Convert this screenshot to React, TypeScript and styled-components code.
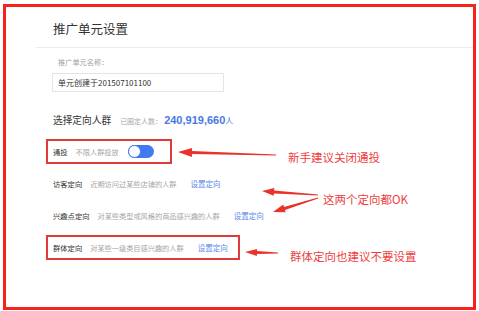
import styled, { createGlobalStyle } from "styled-components";

const GlobalStyle = createGlobalStyle`
  html, body {
    margin: 0;
    padding: 0;
    background: #ffffff;
  }
  body {
    font-family: "Noto Sans CJK SC", "Microsoft YaHei", sans-serif;
    color: #333333;
  }
`;

type Point = [number, number];

// tapered arrow: tip -> tail, head at the tip
function arrowPoints(
  tip: Point,
  tail: Point,
  headLen: number,
  headWidth: number,
  shaftNear: number,
  shaftFar: number
) {
  const dx = tail[0] - tip[0];
  const dy = tail[1] - tip[1];
  const len = Math.hypot(dx, dy);
  const ux = dx / len;
  const uy = dy / len;
  const nx = -uy;
  const ny = ux;
  const bx = tip[0] + ux * headLen;
  const by = tip[1] + uy * headLen;
  const pts: Point[] = [
    tip,
    [bx + (nx * headWidth) / 2, by + (ny * headWidth) / 2],
    [bx + (nx * shaftNear) / 2, by + (ny * shaftNear) / 2],
    [tail[0] + (nx * shaftFar) / 2, tail[1] + (ny * shaftFar) / 2],
    [tail[0] - (nx * shaftFar) / 2, tail[1] - (ny * shaftFar) / 2],
    [bx - (nx * shaftNear) / 2, by - (ny * shaftNear) / 2],
    [bx - (nx * headWidth) / 2, by - (ny * headWidth) / 2],
  ];
  return pts.map((p) => `${p[0].toFixed(1)},${p[1].toFixed(1)}`).join(" ");
}

const arrows: { tip: Point; tail: Point; head: number; width: number }[] = [
  { tip: [178, 152], tail: [276, 155], head: 14, width: 9 },
  { tip: [262, 191], tail: [318, 195], head: 12, width: 8 },
  { tip: [273, 212], tail: [318, 198], head: 12, width: 8 },
  { tip: [245, 252], tail: [278, 253], head: 12, width: 7 },
];

const notes = [
  { text: "新手建议关闭通投", left: 288, top: 149 },
  { text: "这两个定向都OK", left: 323, top: 191 },
  { text: "群体定向也建议不要设置", left: 290, top: 248 },
];

const targets = [
  {
    label: "通投",
    desc: "不限人群投放",
    marked: true,
    toggle: true,
    padRight: 16,
  },
  {
    label: "访客定向",
    desc: "近期访问过某些店铺的人群",
    marked: false,
    toggle: false,
    padRight: 10,
  },
  {
    label: "兴趣点定向",
    desc: "对某些类型或风格的商品感兴趣的人群",
    marked: false,
    toggle: false,
    padRight: 10,
  },
  {
    label: "群体定向",
    desc: "对某些一级类目感兴趣的人群",
    marked: true,
    toggle: false,
    padRight: 10,
  },
];

function App() {
  return (
    <Root>
      <GlobalStyle />
      <Frame>
        <Header>
          <Title>推广单元设置</Title>
        </Header>
        <Body>
          <FieldLabel>推广单元名称：</FieldLabel>
          <NameInput>单元创建于201507101100</NameInput>
          <SectionHead>
            <SectionTitle>选择定向人群</SectionTitle>
            <CountLabel>已圈定人数：</CountLabel>
            <Count>240,919,660</Count>
            <CountUnit>人</CountUnit>
          </SectionHead>
          <Rows>
            {targets.map((t) => (
              <Row key={t.label} $marked={t.marked} $padRight={t.padRight}>
                <RowLabel>{t.label}</RowLabel>
                <RowDesc>{t.desc}</RowDesc>
                {t.toggle ? (
                  <Toggle>
                    <Knob />
                  </Toggle>
                ) : (
                  <SetLink>设置定向</SetLink>
                )}
              </Row>
            ))}
          </Rows>
        </Body>
      </Frame>

      <Overlay width="479" height="311" viewBox="0 0 479 311">
        {arrows.map((a, i) => (
          <polygon
            key={i}
            points={arrowPoints(a.tip, a.tail, a.head, a.width, 3, 1)}
            fill="#e8322a"
          />
        ))}
      </Overlay>
      {notes.map((n) => (
        <Note key={n.text} style={{ left: n.left, top: n.top }}>
          {n.text}
        </Note>
      ))}
    </Root>
  );
}

export default App;

const Root = styled.div`
  position: relative;
  width: 479px;
  height: 311px;
  overflow: hidden;
  background: #ffffff;
`;

const Frame = styled.div`
  box-sizing: border-box;
  margin: 4px 0 0 3px;
  width: 473px;
  height: 306px;
  border: 3px solid #f5231b;
  background: #ffffff;
`;

const Header = styled.div`
  box-sizing: border-box;
  height: 41px;
  margin-left: 30px;
  padding: 13px 0 0 17px;
  border-bottom: 1px solid #ececec;
`;

const Title = styled.h1`
  margin: 0;
  font-size: 12.5px;
  line-height: 18px;
  font-weight: normal;
  color: #333333;
`;

const Body = styled.div`
  display: flex;
  flex-direction: column;
  align-items: flex-start;
  padding-left: 47px;
`;

const FieldLabel = styled.div`
  margin-top: 8px;
  font-size: 7.2px;
  line-height: 12px;
  color: #a0a0a0;
  padding-left: 5px;
`;

const NameInput = styled.div`
  box-sizing: border-box;
  margin: 5px 0 0 -1px;
  width: 172px;
  height: 19px;
  border: 1px solid #e4e4e4;
  padding-left: 5px;
  display: flex;
  align-items: center;
  font-size: 8px;
  color: #333333;
`;

const SectionHead = styled.div`
  display: flex;
  align-items: baseline;
  margin-top: 21px;
  height: 16px;
`;

const SectionTitle = styled.span`
  font-size: 9.7px;
  color: #333333;
  margin-right: 9px;
`;

const CountLabel = styled.span`
  font-size: 7px;
  color: #a8a8a8;
`;

const Count = styled.span`
  font-family: "Liberation Sans", Arial, sans-serif;
  font-weight: bold;
  font-size: 11px;
  color: #4a78e2;
  margin-left: 2px;
`;

const CountUnit = styled.span`
  font-size: 8px;
  color: #4a78e2;
`;

const Rows = styled.div`
  display: flex;
  flex-direction: column;
  align-items: flex-start;
  gap: 7px;
  margin-top: 10px;
`;

const Row = styled.div<{ $marked: boolean; $padRight: number }>`
  box-sizing: border-box;
  display: flex;
  align-items: center;
  height: 25px;
  margin-left: -7px;
  padding: 0 ${(p) => p.$padRight}px 0 5px;
  border: 2px solid ${(p) => (p.$marked ? "#e23a3a" : "transparent")};
`;

const RowLabel = styled.span`
  font-size: 7.3px;
  color: #333333;
  margin-right: 8px;
`;

const RowDesc = styled.span`
  font-size: 7.2px;
  color: #a6a6a6;
`;

const SetLink = styled.span`
  font-size: 7.5px;
  color: #5a88e8;
  margin-left: 14px;
`;

const Toggle = styled.span`
  box-sizing: border-box;
  position: relative;
  display: inline-block;
  margin-left: 9px;
  width: 26px;
  height: 13px;
  border-radius: 7px;
  background: #3f7af0;
`;

const Knob = styled.span`
  position: absolute;
  box-sizing: border-box;
  left: 0;
  top: 0;
  width: 13px;
  height: 13px;
  border-radius: 50%;
  background: #ffffff;
  border: 1.5px solid #3f7af0;
`;

const Overlay = styled.svg`
  position: absolute;
  left: 0;
  top: 0;
  pointer-events: none;
`;

const Note = styled.div`
  position: absolute;
  font-size: 11.5px;
  line-height: 16px;
  color: #ee4040;
  white-space: nowrap;
`;
